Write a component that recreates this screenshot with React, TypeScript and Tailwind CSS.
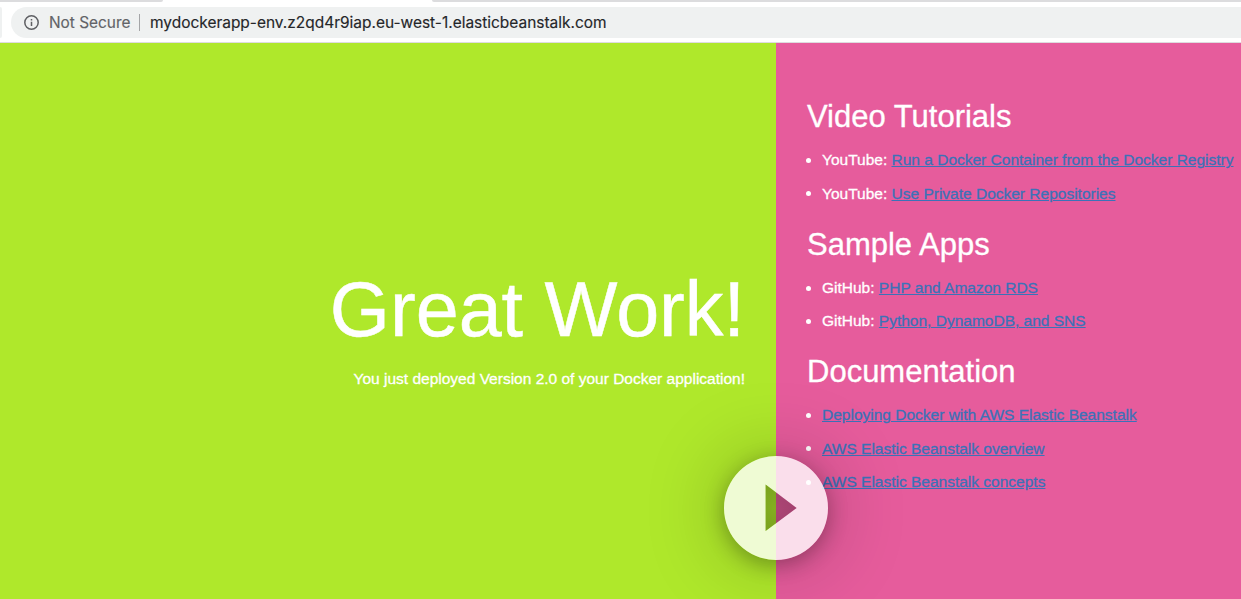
type Item = { prefix?: string; label: string };

const sections: { title: string; items: Item[] }[] = [
  {
    title: "Video Tutorials",
    items: [
      { prefix: "YouTube:", label: "Run a Docker Container from the Docker Registry" },
      { prefix: "YouTube:", label: "Use Private Docker Repositories" },
    ],
  },
  {
    title: "Sample Apps",
    items: [
      { prefix: "GitHub:", label: "PHP and Amazon RDS" },
      { prefix: "GitHub:", label: "Python, DynamoDB, and SNS" },
    ],
  },
  {
    title: "Documentation",
    items: [
      { label: "Deploying Docker with AWS Elastic Beanstalk" },
      { label: "AWS Elastic Beanstalk overview" },
      { label: "AWS Elastic Beanstalk concepts" },
    ],
  },
];

function AddressBar() {
  return (
    <header className="flex h-[43px] shrink-0 flex-col border-b border-[#dedcdf] bg-white">
      <div className="flex h-[2px] shrink-0 justify-between">
        <div className="w-[163px] rounded-br-[10px] bg-[#dcdcde]" />
        <div className="w-[809px] rounded-bl-[10px] bg-[#dcdcde]" />
      </div>
      <div className="mt-[5px] flex h-[31px] gap-[9px]">
        <div className="w-[2px] shrink-0 rounded-r-full bg-[#eff1f1]" />
        <div className="flex min-w-0 flex-1 items-center rounded-l-full bg-[#eff1f1] pl-[13px] font-['Inter',sans-serif] whitespace-nowrap [-webkit-text-stroke:0.15px]">
          <svg className="size-[15px] shrink-0" viewBox="0 0 15 15" fill="none" stroke="#5f6064" strokeWidth="1.5">
            <circle cx="7.5" cy="7.5" r="6.7" />
            <path d="M7.5 6.7v4.2M7.5 3.9v1.5" />
          </svg>
          <span className="ml-[10px] w-[81px] text-[15.4px] text-[#626367]">Not Secure</span>
          <span className="ml-[9px] h-[17px] w-px bg-[#a4a5a7]" />
          <span className="ml-[10px] text-[15.46px] text-[#252629]">mydockerapp-env.z2qd4r9iap.eu-west-1.elasticbeanstalk.com</span>
        </div>
      </div>
    </header>
  );
}

function PlayButton() {
  return (
    <button
      aria-label="Play"
      className="absolute top-[456px] left-[724.4px] size-[104px] rounded-full shadow-[0_5px_20px_rgba(0,0,0,0.28),0_2px_80px_rgba(0,0,0,0.27)]"
    >
      <svg className="size-full" viewBox="0 0 104 104" fillRule="evenodd">
        <defs>
          <radialGradient id="shade" gradientUnits="userSpaceOnUse" cx="51" cy="52" r="28">
            <stop offset="0" stopColor="black" stopOpacity="0.25" />
            <stop offset="1" stopColor="black" stopOpacity="0.31" />
          </radialGradient>
        </defs>
        <path fill="white" fillOpacity="0.8" d="M52 0a52 52 0 1 1 0 104a52 52 0 1 1 0-104ZM41.6 28.5v46.5L72.6 52Z" />
        <path fill="url(#shade)" d="M41.6 28.5v46.5L72.6 52Z" />
      </svg>
    </button>
  );
}

export default function App() {
  return (
    <div className="relative flex h-[599px] w-[1241px] flex-col overflow-hidden font-['Liberation_Sans',Arial,sans-serif] text-[15.5px] text-white">
      <AddressBar />
      <main className="flex min-h-0 flex-1">
        <section className="flex w-[776px] shrink-0 flex-col items-end bg-[#afe82b] pt-[221px] pr-[31px] whitespace-nowrap">
          <h1 className="text-[77.3px] leading-[90px] [-webkit-text-stroke:0.5px]">Great Work!</h1>
          <p className="mt-[15px] leading-[20px] [-webkit-text-stroke:0.3px]">You just deployed Version 2.0 of your Docker application!</p>
        </section>
        <section className="flex min-w-0 flex-1 flex-col bg-[#e65c9c] pt-[56.4px] pl-[31px] whitespace-nowrap">
          {sections.map((section) => (
            <div key={section.title} className="mb-[17px]">
              <h2 className="text-[31px] leading-[36px] [-webkit-text-stroke:0.3px]">{section.title}</h2>
              <ul className="mt-[8px]">
                {section.items.map((item) => (
                  <li key={item.label} className="flex h-[33.25px] items-center [-webkit-text-stroke:0.3px]">
                    <span className="mt-px mr-[11.5px] -ml-[1.5px] size-[5px] rounded-full bg-white" />
                    {item.prefix && <span className="mr-[4.3px]">{item.prefix}</span>}
                    <a className="text-[#3b72b8] underline">{item.label}</a>
                  </li>
                ))}
              </ul>
            </div>
          ))}
        </section>
      </main>
      <PlayButton />
    </div>
  );
}
